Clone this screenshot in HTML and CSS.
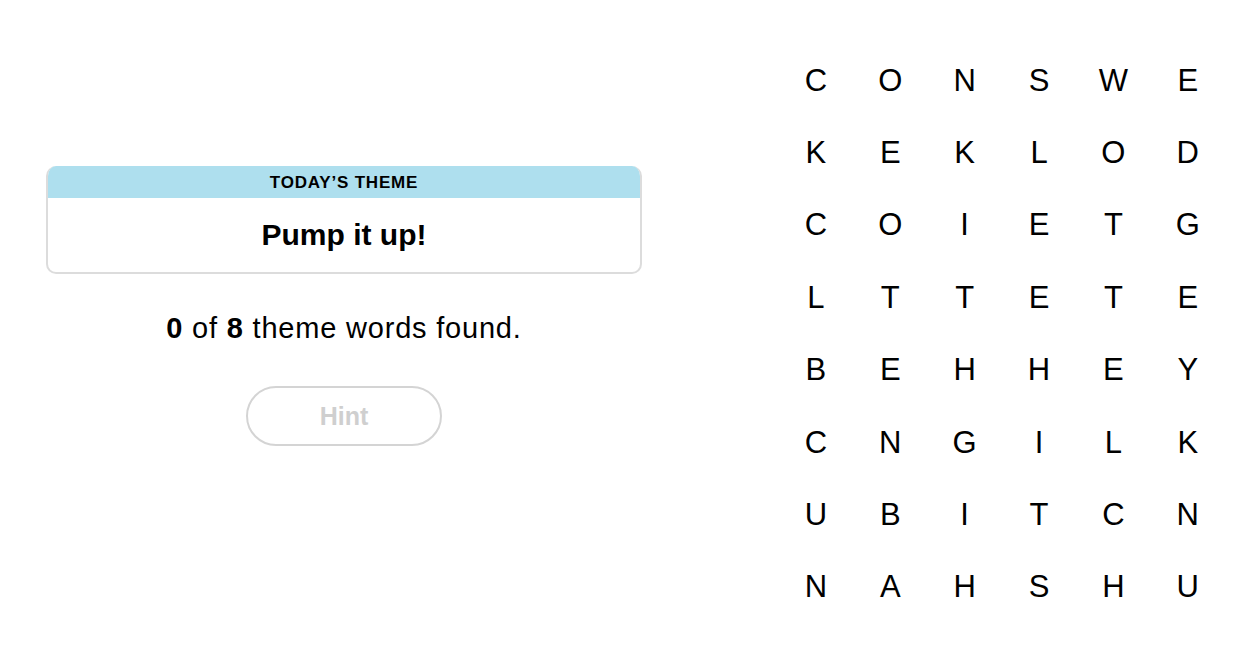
FILE: index.html
```html
<!DOCTYPE html>
<html lang="en">
<head>
<meta charset="utf-8">
<title>Strands</title>
<link rel="stylesheet" href="styles.css">
</head>
<body>
<main class="page">
  <section class="side">
    <div class="theme-card">
      <div class="theme-head">TODAY’S THEME</div>
      <div class="theme-body">Pump it up!</div>
    </div>
    <p class="progress"><b>0</b> of <b>8</b> theme words found.</p>
    <button class="hint" disabled>Hint</button>
  </section>
  <section class="board">
    <span>C</span><span>O</span><span>N</span><span>S</span><span>W</span><span>E</span>
    <span>K</span><span>E</span><span>K</span><span>L</span><span>O</span><span>D</span>
    <span>C</span><span>O</span><span>I</span><span>E</span><span>T</span><span>G</span>
    <span>L</span><span>T</span><span>T</span><span>E</span><span>T</span><span>E</span>
    <span>B</span><span>E</span><span>H</span><span>H</span><span>E</span><span>Y</span>
    <span>C</span><span>N</span><span>G</span><span>I</span><span>L</span><span>K</span>
    <span>U</span><span>B</span><span>I</span><span>T</span><span>C</span><span>N</span>
    <span>N</span><span>A</span><span>H</span><span>S</span><span>H</span><span>U</span>
  </section>
</main>
</body>
</html>
```
FILE: styles.css
```css
html, body {
  margin: 0;
  padding: 0;
  background: #fff;
}
body {
  font-family: "Liberation Sans", Arial, sans-serif;
  color: #000;
  width: 1250px;
  height: 666px;
  overflow: hidden;
}
.page {
  display: flex;
  align-items: flex-start;
}
.side {
  width: 596px;
  margin-left: 46px;
  padding-top: 166px;
  display: flex;
  flex-direction: column;
  align-items: center;
}
.theme-card {
  width: 100%;
  box-sizing: border-box;
  border: 2px solid #dcdcdc;
  border-top: none;
  border-radius: 10px;
  overflow: hidden;
}
.theme-head {
  background: #aedfee;
  height: 32px;
  line-height: 33px;
  text-align: center;
  font-size: 17px;
  font-weight: 600;
  letter-spacing: 0.8px;
  margin: 0 -2px;
}
.theme-body {
  height: 74px;
  line-height: 74px;
  text-align: center;
  font-size: 30px;
  font-weight: 700;
  letter-spacing: 0;
}
.progress {
  margin: 34px 0 0;
  font-size: 29px;
  line-height: 40px;
  letter-spacing: 0.8px;
}
.progress b {
  font-weight: 700;
}
.hint {
  margin-top: 38px;
  width: 196px;
  height: 60px;
  border: 2px solid #d4d4d4;
  border-radius: 30px;
  background: #fff;
  color: #cfcfcf;
  font-family: "Liberation Sans", Arial, sans-serif;
  font-size: 25px;
  font-weight: 700;
  padding: 0;
}
.board {
  margin-left: auto;
  margin-right: 25px;
  margin-top: 44px;
  display: grid;
  grid-template-columns: repeat(6, 74.4px);
  grid-auto-rows: 72.4px;
}
.board span {
  display: flex;
  align-items: center;
  justify-content: center;
  font-size: 31px;
  line-height: 1;
}
```
